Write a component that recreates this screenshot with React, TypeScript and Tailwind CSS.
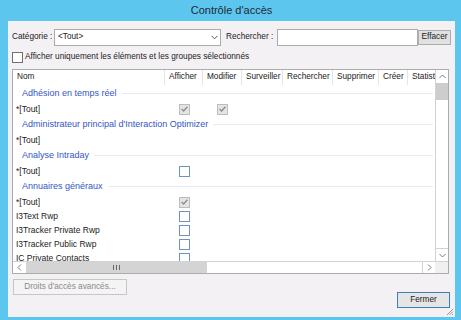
import React from "react";

function Chk({ checked }: { checked?: boolean }) {
  if (checked)
    return (
      <div className="w-[11px] h-[11px] border border-[#bdbdbd] bg-[#e4e4e4] flex items-center justify-center">
        <svg width="7" height="6" viewBox="0 0 7 6">
          <path d="M0.6 3 L2.6 5 L6.4 0.8" stroke="#8a8a8a" strokeWidth="1.3" fill="none" />
        </svg>
      </div>
    );
  return <div className="w-[11px] h-[11px] border border-[#6e92c2] bg-white" />;
}

function Group({ label }: { label: string }) {
  return (
    <div className="h-[17px] flex items-center pl-[9px] pr-[2px] whitespace-nowrap">
      <span className="text-[#3556c4] text-[9px]">{label}</span>
      <div className="flex-1 h-px bg-[#e3ebf5] ml-[5px]" />
    </div>
  );
}

function Item({ label, a, m }: { label: string; a?: "c" | "u"; m?: "c" | "u" }) {
  return (
    <div className="h-[14px] flex items-center whitespace-nowrap">
      <div className="w-[152px] pl-[3px] text-[8.5px]">{label}</div>
      <div className="w-[38px] flex justify-center">{a && <Chk checked={a === "c"} />}</div>
      <div className="w-[39px] flex justify-center">{m && <Chk checked={m === "c"} />}</div>
    </div>
  );
}

const cols: [string, string][] = [
  ["Nom", "w-[152px]"],
  ["Afficher", "w-[38px]"],
  ["Modifier", "w-[39px]"],
  ["Surveiller", "w-[41px]"],
  ["Rechercher", "w-[50px]"],
  ["Supprimer", "w-[46px]"],
  ["Créer", "w-[29px]"],
  ["Statist", "w-[50px]"],
];

export default function App() {
  return (
    <div className="w-[461px] h-[320px] bg-[#5dc6ef] flex flex-col font-['Liberation_Sans',Arial,sans-serif] text-[8.25px] text-[#222222] overflow-hidden">
      <div className="h-[21px] flex items-center justify-center text-[11px] text-[#1f2a33] pl-[2px]">
        Contrôle d'accès
      </div>
      <div className="relative ml-[8px] mr-[6px] mb-[3px] flex-1 bg-[#f4f1f5] pt-[8px] pl-[4px] flex flex-col">
        {/* row 1 */}
        <div className="flex items-center h-[17px] whitespace-nowrap">
          <div className="w-[42px]">Catégorie :</div>
          <div className="w-[167px] h-[17px] border border-[#ababab] bg-white flex items-center pl-[3px] pr-[2px]">
            <span className="flex-1">&lt;Tout&gt;</span>
            <svg width="7" height="5" viewBox="0 0 7 5">
              <path d="M0.5 0.8 L3.5 3.8 L6.5 0.8" stroke="#555" strokeWidth="1" fill="none" />
            </svg>
          </div>
          <div className="w-[51px] ml-[5px]">Rechercher :</div>
          <div className="w-[141px] h-[17px] border border-[#ababab] bg-white" />
          <div className="w-[33px] h-[15px] border border-[#adadad] bg-[#e1e1e1] flex items-center justify-center">
            Effacer
          </div>
        </div>
        {/* checkbox row */}
        <div className="flex items-center h-[12px] mt-[5px] whitespace-nowrap">
          <div className="w-[11px] h-[11px] border border-[#6f6f6f] bg-white" />
          <span className="ml-[2px]">Afficher uniquement les éléments et les groupes sélectionnés</span>
        </div>
        {/* table */}
        <div className="mt-[6px] w-[437px] h-[205px] border border-[#acacac] bg-white flex flex-col">
          <div className="flex h-[191px]">
            <div className="w-[422px] overflow-hidden">
              <div className="h-[15px] flex whitespace-nowrap">
                {cols.map(([c, w]) => (
                  <div key={c} className={`${w} shrink-0 h-[15px] border-r border-[#e5e5e5] pl-[4px] flex items-center overflow-hidden`}>
                    {c}
                  </div>
                ))}
              </div>
              <Group label="Adhésion en temps réel" />
              <Item label="*[Tout]" a="c" m="c" />
              <Group label="Administrateur principal d'Interaction Optimizer" />
              <Item label="*[Tout]" />
              <Group label="Analyse Intraday" />
              <Item label="*[Tout]" a="u" />
              <Group label="Annuaires généraux" />
              <Item label="*[Tout]" a="c" />
              <Item label="I3Text Rwp" a="u" />
              <Item label="I3Tracker Private Rwp" a="u" />
              <Item label="I3Tracker Public Rwp" a="u" />
              <Item label="IC Private Contacts" a="u" />
            </div>
            <div className="w-[13px] border-l border-[#d2d2d2] flex flex-col">
              <div className="h-[13px] flex items-center justify-center">
                <svg width="7" height="5" viewBox="0 0 7 5">
                  <path d="M0.5 4 L3.5 1 L6.5 4" stroke="#7a7a7a" strokeWidth="1" fill="none" />
                </svg>
              </div>
              <div className="h-[17px] bg-[#cdcdcd]" />
              <div className="flex-1" />
              <div className="h-[13px] border-t border-[#d2d2d2] flex items-center justify-center">
                <svg width="7" height="5" viewBox="0 0 7 5">
                  <path d="M0.5 1 L3.5 4 L6.5 1" stroke="#7a7a7a" strokeWidth="1" fill="none" />
                </svg>
              </div>
            </div>
          </div>
          <div className="h-[12px] flex border-t border-[#d2d2d2]">
            <div className="w-[13px] flex items-center justify-center">
              <svg width="5" height="7" viewBox="0 0 5 7">
                <path d="M4 0.5 L1 3.5 L4 6.5" stroke="#7a7a7a" strokeWidth="1" fill="none" />
              </svg>
            </div>
            <div className="w-[181px] bg-[#d4d4d4] flex items-center justify-center">
              <svg width="7" height="5" viewBox="0 0 7 5">
                <path d="M0.5 0 V5 M3.5 0 V5 M6.5 0 V5" stroke="#6a6a6a" strokeWidth="1" />
              </svg>
            </div>
            <div className="flex-1" />
            <div className="w-[13px] border-l border-[#d2d2d2] flex items-center justify-center">
              <svg width="5" height="7" viewBox="0 0 5 7">
                <path d="M1 0.5 L4 3.5 L1 6.5" stroke="#7a7a7a" strokeWidth="1" fill="none" />
              </svg>
            </div>
            <div className="w-[13px] bg-[#f0f0f0]" />
          </div>
        </div>
        {/* bottom */}
        <div className="mt-[5px] w-[438px] h-[29px] flex justify-between">
          <div className="self-start ml-[1px] w-[114px] h-[16px] border border-[#c6c6c6] bg-[#f4f4f4] text-[#8a8a8a] flex items-center justify-center">
            Droits d'accès avancés...
          </div>
          <div className="self-end w-[53px] h-[16px] border border-[#3c7fb1] bg-[#e5e5e5] flex items-center justify-center">
            Fermer
          </div>
        </div>
        <svg className="absolute right-[1px] bottom-[1px]" width="8" height="8" viewBox="0 0 8 8">
          <path d="M7 1 L1 7 M7 3.5 L3.5 7 M7 6 L6 7" stroke="#9a9a9a" strokeWidth="1" />
        </svg>
      </div>
    </div>
  );
}
